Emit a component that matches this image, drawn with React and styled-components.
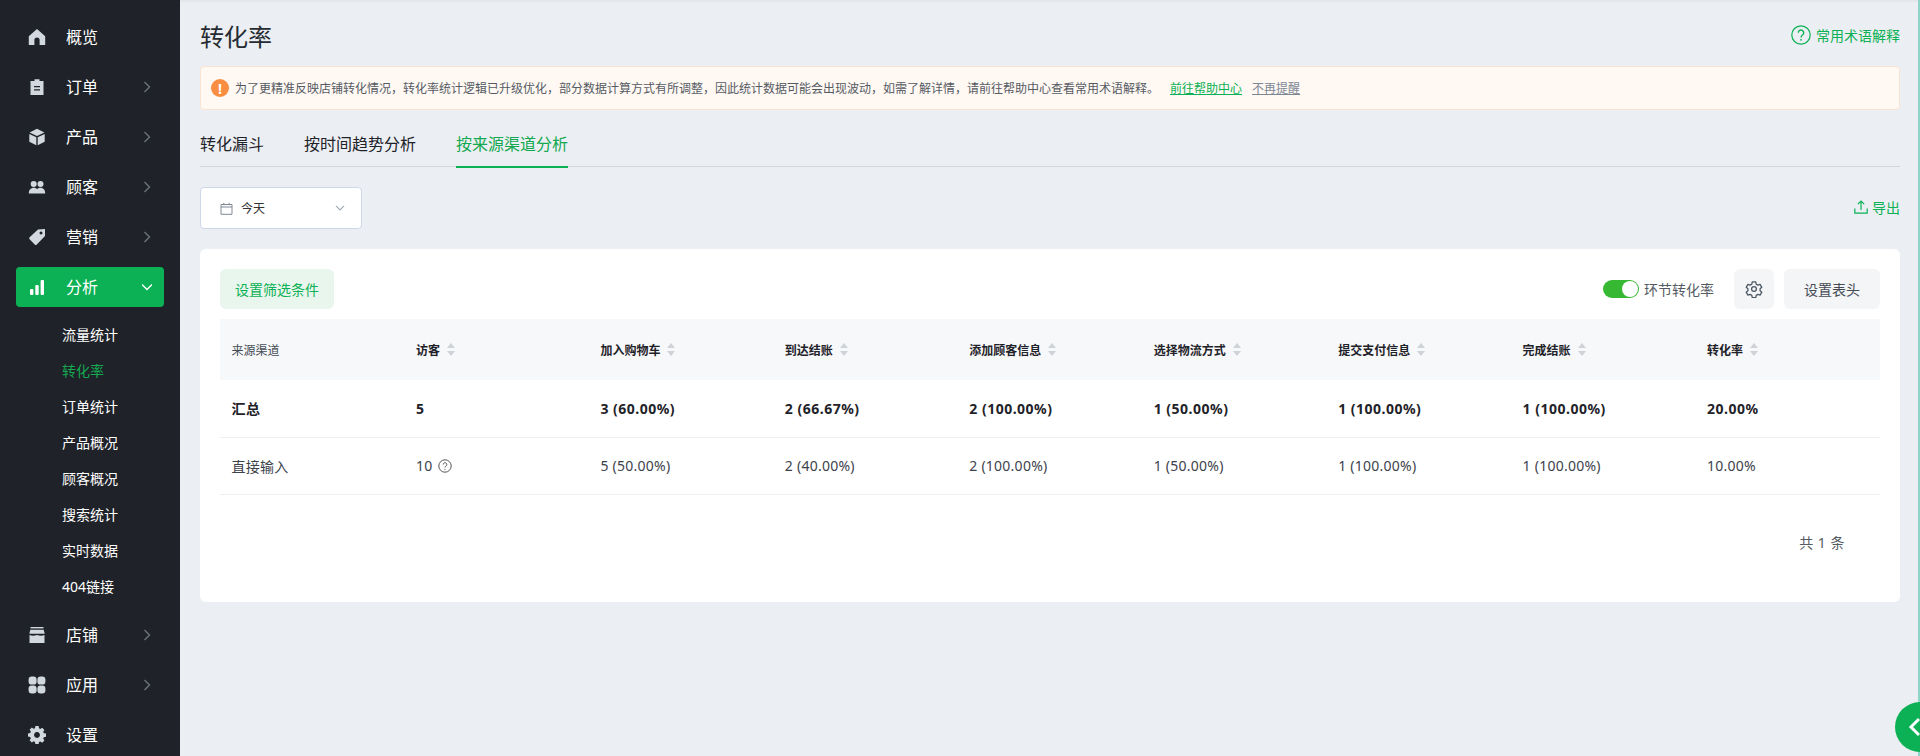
import React from 'react';
import styled, { createGlobalStyle } from 'styled-components';

const FONT = '"Noto Sans", "Noto Sans CJK SC", sans-serif';
const GREEN = '#0bb154';

const navTop = [
  { key: 'home', label: '概览' },
  { key: 'order', label: '订单', arrow: true },
  { key: 'product', label: '产品', arrow: true },
  { key: 'customer', label: '顾客', arrow: true },
  { key: 'tag', label: '营销', arrow: true },
];
const subNav = ['流量统计', '转化率', '订单统计', '产品概况', '顾客概况', '搜索统计', '实时数据', '404链接'];
const navBottom = [
  { key: 'store', label: '店铺', arrow: true },
  { key: 'apps', label: '应用', arrow: true },
  { key: 'gear', label: '设置' },
];

const columns = [
  { label: '来源渠道' },
  { label: '访客', sort: true },
  { label: '加入购物车', sort: true },
  { label: '到达结账', sort: true },
  { label: '添加顾客信息', sort: true },
  { label: '选择物流方式', sort: true },
  { label: '提交支付信息', sort: true },
  { label: '完成结账', sort: true },
  { label: '转化率', sort: true },
];
const rows = [
  ['汇总', '5', '3 (60.00%)', '2 (66.67%)', '2 (100.00%)', '1 (50.00%)', '1 (100.00%)', '1 (100.00%)', '20.00%'],
  ['直接输入', '10', '5 (50.00%)', '2 (40.00%)', '2 (100.00%)', '1 (50.00%)', '1 (100.00%)', '1 (100.00%)', '10.00%'],
];

const NavIcon = ({ name }) => {
  const paths = {
    home: <path d="M9 1 .8 8.2V17h5.6v-5a2.6 2.6 0 0 1 5.200 0v5h5.600V8.200z" />,
    order: <path fillRule="evenodd" d="M6.500 1.200h5V3H15.500v14h-13V3h4zM6 8h6v1.300H6zm0 3.200h6v1.300H6z" />,
    product: (
      <>
        <path d="M9 .8 16.400 4.500 9 8 1.600 4.500z" />
        <path d="M1.300 6 8.300 9.300V17.200L1.300 13.800z" />
        <path d="M16.700 6 9.700 9.300v7.900l7-3.400z" />
      </>
    ),
    customer: (
      <>
        <circle cx="5.700" cy="6" r="3" />
        <circle cx="12.500" cy="6" r="3" />
        <path d="M.8 15.500c0-3.500 2.100-5.700 4.900-5.700 1.500 0 2.600.5 3.400 1.500.8-1 1.900-1.500 3.400-1.500 2.800 0 4.700 2.200 4.700 5.700z" />
      </>
    ),
    tag: <path fillRule="evenodd" d="M10 1.500 17 1v7L8.800 16.400a1.500 1.500 0 0 1-2.100 0L1.600 11.300a1.500 1.500 0 0 1 0-2.100zM13 3.600a1.500 1.500 0 1 0 .01 0z" />,
    chart: (
      <>
        <rect x="2" y="11" width="3.400" height="6" rx="1" />
        <rect x="7.300" y="7" width="3.400" height="10" rx="1" />
        <rect x="12.600" y="2" width="3.400" height="15" rx="1" />
      </>
    ),
    store: (
      <>
        <path d="M2.500 1h13v1.400h-13z" />
        <path d="M2.300 3.700h13.400l1 4H1.300z" />
        <path d="M1.500 9c2.400 1 4.600 1 7.500 0 2.900 1 5.100 1 7.500 0v8h-15z" />
      </>
    ),
    apps: (
      <>
        <rect x=".6" y=".6" width="8" height="8" rx="3.200" />
        <rect x="9.400" y=".6" width="8" height="8" rx="3.200" />
        <rect x=".6" y="9.400" width="8" height="8" rx="3.200" />
        <rect x="9.400" y="9.400" width="8" height="8" rx="3.200" />
      </>
    ),
    gear: (
      <path
        fillRule="evenodd"
        d="M7.400 1h3.200l.4 2.200 1.300.6 1.900-1.200 2.200 2.300-1.200 1.800.6 1.400 2.200.4v3.200l-2.200.4-.6 1.400 1.200 1.800-2.200 2.300-1.900-1.200-1.300.6-.4 2.200H7.400L7 16.800l-1.300-.6-1.900 1.200-2.200-2.300 1.200-1.800-.6-1.400L0 11.500V8.300l2.200-.4.6-1.400-1.200-1.800 2.200-2.300 1.900 1.200L7 3.200zM9 7a2.900 2.900 0 1 0 .01 0z"
        transform="translate(0 -.9)"
      />
    ),
  };
  return (
    <svg width="18" height="18" viewBox="0 0 18 18" fill="currentColor">
      {paths[name]}
    </svg>
  );
};

const Chevron = ({ open }) => (
  <svg width="10" height="12" viewBox="0 0 10 12" fill="none" stroke="currentColor" strokeWidth="1.400">
    {open ? <path d="M0 3.500 5 8.500 10 3.500" /> : <path d="M2.500 1 7.500 6 2.500 11" />}
  </svg>
);

const SortCaret = () => (
  <svg width="8" height="13" viewBox="0 0 8 13" fill="#cfd2d6">
    <path d="M4 0 8 5H0zM0 8h8l-4 5z" />
  </svg>
);

const App = () => (
  <Page>
    <GlobalStyle />
    <Sidebar>
      {navTop.map((item) => (
        <NavItem key={item.key}>
          <NavIconSlot>
            <NavIcon name={item.key} />
          </NavIconSlot>
          <NavLabel>{item.label}</NavLabel>
          {item.arrow && (
            <NavArrow>
              <Chevron />
            </NavArrow>
          )}
        </NavItem>
      ))}
      <NavItem active>
        <NavIconSlot>
          <NavIcon name="chart" />
        </NavIconSlot>
        <NavLabel>分析</NavLabel>
        <NavArrow active>
          <Chevron open />
        </NavArrow>
      </NavItem>
      <SubList>
        {subNav.map((label) => (
          <SubItem key={label} active={label === '转化率'}>
            {label}
          </SubItem>
        ))}
      </SubList>
      {navBottom.map((item) => (
        <NavItem key={item.key}>
          <NavIconSlot>
            <NavIcon name={item.key} />
          </NavIconSlot>
          <NavLabel>{item.label}</NavLabel>
          {item.arrow && (
            <NavArrow>
              <Chevron />
            </NavArrow>
          )}
        </NavItem>
      ))}
    </Sidebar>
    <Main>
      <Header>
        <Title>转化率</Title>
        <HelpLink>
          <svg width="20" height="20" viewBox="0 0 20 20" fill="none" stroke={GREEN} strokeWidth="1.200">
            <circle cx="10" cy="10" r="9.200" />
            <path d="M7.300 7.800a2.700 2.700 0 1 1 4.200 2.200c-1 .7-1.500 1.100-1.500 2.400" strokeWidth="1.400" />
            <circle cx="10" cy="14.800" r=".9" fill={GREEN} stroke="none" />
          </svg>
          常用术语解释
        </HelpLink>
      </Header>
      <Alert>
        <AlertIcon>!</AlertIcon>
        <AlertText>
          为了更精准反映店铺转化情况，转化率统计逻辑已升级优化，部分数据计算方式有所调整，因此统计数据可能会出现波动，如需了解详情，请前往帮助中心查看常用术语解释。
        </AlertText>
        <AlertLink>前往帮助中心</AlertLink>
        <AlertLink muted>不再提醒</AlertLink>
      </Alert>
      <Tabs>
        <Tab>转化漏斗</Tab>
        <Tab>按时间趋势分析</Tab>
        <Tab active>按来源渠道分析</Tab>
      </Tabs>
      <FilterBar>
        <DateSelect>
          <svg width="13" height="13" viewBox="0 0 13 13" fill="none" stroke="#7f8a96">
            <path d="M1 2.500h11v9.800H1zM1 5h11M3.800.8v2.400M9.200.8v2.400" />
          </svg>
          <DateText>今天</DateText>
          <DateCaret>
            <svg width="10" height="6" viewBox="0 0 10 6" fill="none" stroke="#a3acb6" strokeWidth="1.200">
              <path d="M1 .8 5 4.800 9 .8" />
            </svg>
          </DateCaret>
        </DateSelect>
        <ExportLink>
          <svg width="14" height="14" viewBox="0 0 14 14" fill="none" stroke={GREEN} strokeWidth="1.200">
            <path d="M.8 8.500v4.700h12.400V8.500M7 10V1.200M3.800 4.200 7 1l3.200 3.200" />
          </svg>
          导出
        </ExportLink>
      </FilterBar>
      <Card>
        <CardToolbar>
          <FilterButton>设置筛选条件</FilterButton>
          <ToolbarRight>
            <ToggleWrap>
              <Toggle />
              <ToggleLabel>环节转化率</ToggleLabel>
            </ToggleWrap>
            <GrayButton square>
              <svg width="18" height="18" viewBox="0 0 24 24" fill="none" stroke="#4d5865" strokeWidth="1.700" strokeLinejoin="round">
                <path d="M9.700 2.500h4.600l.6 3 2.300 1.300 2.900-1 2.300 4-2.300 2v2.400l2.300 2-2.300 4-2.900-1-2.300 1.300-.6 3H9.700l-.6-3-2.300-1.300-2.900 1-2.300-4 2.300-2v-2.400l-2.300-2 2.300-4 2.900 1 2.300-1.300z" />
                <circle cx="12" cy="12" r="3.200" />
              </svg>
            </GrayButton>
            <GrayButton>设置表头</GrayButton>
          </ToolbarRight>
        </CardToolbar>
        <Table>
          <thead>
            <tr>
              {columns.map((col, i) => (
                <HeadCell key={col.label} plain={i === 0}>
                  <HeadInner>
                    {col.label}
                    {col.sort && <SortCaret />}
                  </HeadInner>
                </HeadCell>
              ))}
            </tr>
          </thead>
          <tbody>
            {rows.map((row, r) => (
              <tr key={row[0]}>
                {row.map((cell, c) => (
                  <BodyCell key={c} bold={r === 0}>
                    {cell}
                    {r === 1 && c === 1 && (
                      <CellHint>
                        <svg width="14" height="14" viewBox="0 0 14 14" fill="none" stroke="#555" strokeWidth="1">
                          <circle cx="7" cy="7" r="6.200" />
                          <path d="M5.200 5.500a1.800 1.800 0 1 1 2.800 1.500c-.7.5-1 .7-1 1.500" />
                          <circle cx="7" cy="10.300" r=".6" fill="#555" stroke="none" />
                        </svg>
                      </CellHint>
                    )}
                  </BodyCell>
                ))}
              </tr>
            ))}
          </tbody>
        </Table>
        <Pagination>共 1 条</Pagination>
      </Card>
    </Main>
    <EdgeLine />
    <FloatButton>
      <svg width="14" height="22" viewBox="0 0 14 22" fill="none" stroke="#fff" strokeWidth="3">
        <path d="M11 3 3 11l8 8" />
      </svg>
    </FloatButton>
  </Page>
);

export default App;

const GlobalStyle = createGlobalStyle`
  html, body {
    margin: 0;
    padding: 0;
    height: 100%;
    overflow: hidden;
    background: #ebeff3;
    font-family: ${FONT};
  }
  * {
    box-sizing: border-box;
  }
`;

const Page = styled.div`
  position: relative;
  display: flex;
  width: 1920px;
  height: 756px;
  overflow: hidden;
`;

const Sidebar = styled.aside`
  flex: none;
  display: flex;
  flex-direction: column;
  width: 180px;
  height: 756px;
  padding: 17px 16px 0;
  background: #1f2329;
  color: #fff;
`;

const NavItem = styled.div`
  flex: none;
  display: flex;
  align-items: center;
  height: 40px;
  margin-bottom: 10px;
  padding: 0 12px;
  border-radius: 4px;
  background: ${(p) => (p.active ? GREEN : 'transparent')};
  color: ${(p) => (p.active ? '#fff' : '#d2d8e0')};
`;

const NavIconSlot = styled.span`
  display: flex;
  width: 26px;
  margin-right: 12px;
`;

const NavLabel = styled.span`
  flex: 1;
  padding-bottom: 2px;
  color: #fff;
  font-size: 16px;
`;

const NavArrow = styled.span`
  display: flex;
  color: ${(p) => (p.active ? '#fff' : '#6d7278')};
`;

const SubList = styled.div`
  flex: none;
  display: flex;
  flex-direction: column;
  margin-bottom: 10px;
`;

const SubItem = styled.div`
  height: 36px;
  padding-left: 46px;
  color: ${(p) => (p.active ? '#14a851' : '#fff')};
  font-size: 14px;
  line-height: 36px;
`;

const Main = styled.main`
  flex: 1;
  min-width: 0;
  padding: 0 20px;
  box-shadow: inset 0 3px 3px -2px rgba(0, 0, 0, 0.06);
`;

const Header = styled.header`
  display: flex;
  align-items: center;
  justify-content: space-between;
  height: 66px;
  padding-top: 4px;
`;

const Title = styled.h1`
  margin: 0;
  color: #262b31;
  font-size: 24px;
  font-weight: 400;
`;

const HelpLink = styled.a`
  display: flex;
  align-items: center;
  gap: 5px;
  color: ${GREEN};
  font-size: 14px;
`;

const Alert = styled.div`
  display: flex;
  align-items: center;
  height: 44px;
  padding: 0 10px;
  border: 1px solid #fbe3d2;
  border-radius: 4px;
  background: #fff8f3;
  font-size: 12px;
`;

const AlertIcon = styled.span`
  display: flex;
  align-items: center;
  justify-content: center;
  width: 18px;
  height: 18px;
  margin-right: 6px;
  border-radius: 50%;
  background: #f98e42;
  color: #fff;
  font-size: 14px;
  font-weight: 700;
`;

const AlertText = styled.span`
  margin-right: 11px;
  color: #555b63;
`;

const AlertLink = styled.a`
  margin-right: 10px;
  color: ${(p) => (p.muted ? '#7c8796' : GREEN)};
  text-decoration: underline;
`;

const Tabs = styled.nav`
  display: flex;
  gap: 40px;
  height: 57px;
  padding-top: 20px;
  border-bottom: 1px solid #d3d6da;
`;

const Tab = styled.div`
  height: 38px;
  border-bottom: ${(p) => (p.active ? `2px solid ${GREEN}` : 'none')};
  color: ${(p) => (p.active ? '#14a851' : '#1f2329')};
  font-size: 16px;
  line-height: 28px;
`;

const FilterBar = styled.div`
  display: flex;
  align-items: center;
  justify-content: space-between;
  height: 42px;
  margin-top: 20px;
`;

const DateSelect = styled.div`
  display: flex;
  align-items: center;
  width: 162px;
  height: 42px;
  padding: 0 16px 0 19px;
  border: 1px solid #cfd8e8;
  border-radius: 4px;
  background: #fff;
`;

const DateText = styled.span`
  flex: 1;
  margin-left: 8px;
  color: #333;
  font-size: 12px;
`;

const DateCaret = styled.span`
  display: flex;
`;

const ExportLink = styled.a`
  display: flex;
  align-items: center;
  gap: 4px;
  padding-bottom: 2px;
  color: ${GREEN};
  font-size: 14px;
`;

const Card = styled.section`
  height: 353px;
  margin-top: 20px;
  padding: 20px;
  border-radius: 6px;
  background: #fff;
`;

const CardToolbar = styled.div`
  display: flex;
  align-items: center;
  justify-content: space-between;
`;

const FilterButton = styled.button`
  width: 114px;
  height: 40px;
  padding: 0;
  border: none;
  border-radius: 6px;
  background: #e8f6ee;
  color: ${GREEN};
  font-family: inherit;
  font-size: 14px;
`;

const ToolbarRight = styled.div`
  display: flex;
  align-items: center;
  gap: 10px;
`;

const ToggleWrap = styled.div`
  display: flex;
  align-items: center;
  gap: 5px;
  margin-right: 10px;
`;

const Toggle = styled.span`
  position: relative;
  width: 36px;
  height: 18px;
  border-radius: 9px;
  background: #37b832;

  &::after {
    content: '';
    position: absolute;
    top: 1px;
    right: 1px;
    width: 16px;
    height: 16px;
    border-radius: 50%;
    background: #fff;
  }
`;

const ToggleLabel = styled.span`
  color: #555b63;
  font-size: 14px;
`;

const GrayButton = styled.button`
  display: flex;
  align-items: center;
  justify-content: center;
  width: ${(p) => (p.square ? '40px' : '96px')};
  height: 40px;
  padding: 0;
  border: none;
  border-radius: 6px;
  background: #f4f5f7;
  color: #444b55;
  font-family: inherit;
  font-size: 14px;
`;

const Table = styled.table`
  width: 1660px;
  margin-top: 10px;
  border-collapse: collapse;
  table-layout: fixed;
`;

const HeadCell = styled.th`
  height: 61px;
  padding: 0 12px 0 11.5px;
  background: #f7f8fa;
  color: ${(p) => (p.plain ? '#444b55' : '#1f2329')};
  font-size: 12px;
  font-weight: ${(p) => (p.plain ? 400 : 600)};
  text-align: left;
`;

const HeadInner = styled.span`
  display: flex;
  align-items: center;
  gap: 7px;
`;

const BodyCell = styled.td`
  height: 57px;
  padding: 0 12px 0 11.5px;
  border-bottom: 1px solid #edeff2;
  color: ${(p) => (p.bold ? '#1f2329' : '#3c424b')};
  font-size: 14px;
  font-weight: ${(p) => (p.bold ? 700 : 400)};
  letter-spacing: ${(p) => (p.bold ? '0.5px' : '0.25px')};
`;

const CellHint = styled.span`
  display: inline-flex;
  margin-left: 6px;
  vertical-align: -2px;
`;

const Pagination = styled.div`
  margin-top: 37px;
  padding-right: 35px;
  color: #555b63;
  font-size: 14px;
  letter-spacing: 0.5px;
  text-align: right;
`;

const EdgeLine = styled.div`
  position: absolute;
  top: 0;
  right: 0;
  width: 2px;
  height: 100%;
  background: #8ed5c8;
`;

const FloatButton = styled.div`
  position: absolute;
  top: 702px;
  left: 1895px;
  display: flex;
  align-items: center;
  width: 50px;
  height: 50px;
  padding-left: 13px;
  border-radius: 50%;
  background: ${GREEN};
`;
